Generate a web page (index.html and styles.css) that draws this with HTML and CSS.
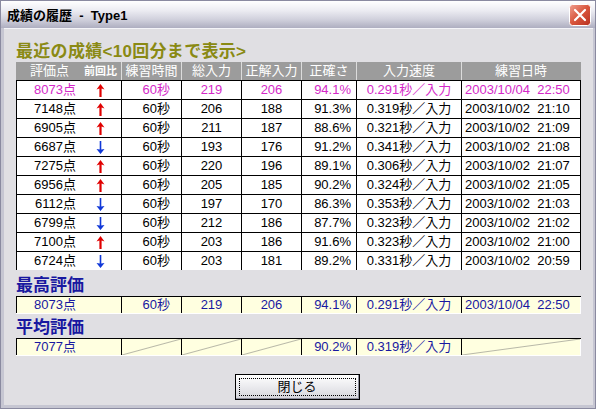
FILE: index.html
```html
<!DOCTYPE html>
<html>
  <head>
    <title>成績の履歴 - Type1</title>
    <link rel="stylesheet" href="styles.css">
  </head>
  <body>
    <svg class="defs" width="0" height="0">
      <symbol id="arrow-up" viewBox="0 0 9 13">
        <polygon points="4.5,0 8.5,5.5 5.6,4.6 5.6,13 3.4,13 3.4,4.6 0.5,5.5" fill="#e00000"/>
      </symbol>
      <symbol id="arrow-down" viewBox="0 0 9 13">
        <polygon points="4.5,13 8.5,8 5.3,8.6 5.3,0 3.7,0 3.7,8.6 0.5,8" fill="#1038d8"/>
      </symbol>
    </svg>

    <div class="window">
      <div class="titlebar">
        <span class="title">成績の履歴  -  Type1</span>
        <svg class="close-icon" width="22" height="22" viewBox="0 0 22 22">
          <defs>
            <linearGradient id="close-bg" x1="0" y1="0" x2="1" y2="1">
              <stop offset="0" stop-color="#f0a090"/>
              <stop offset="0.5" stop-color="#d8553c"/>
              <stop offset="1" stop-color="#b83020"/>
            </linearGradient>
          </defs>
          <rect x="0.5" y="0.5" width="21" height="21" rx="3" fill="url(#close-bg)" stroke="#ffffff"/>
          <path d="M6 6 L16 16 M16 6 L6 16" stroke="#ffffff" stroke-width="2.2" stroke-linecap="round"/>
        </svg>
      </div>

      <div class="frame">
        <div class="client">
          <h2 class="heading recent">最近の成績&lt;10回分まで表示&gt;</h2>

          <div class="row head-row">
            <div class="cell head score-head"><span class="score-label">評価点</span><span class="diff-label">前回比</span></div>
            <div class="cell head">練習時間</div>
            <div class="cell head">総入力</div>
            <div class="cell head">正解入力</div>
            <div class="cell head">正確さ</div>
            <div class="cell head">入力速度</div>
            <div class="cell head last">練習日時</div>
          </div>

          <div class="row data-row latest">
            <div class="cell score"><span class="points">8073点</span><svg class="arrow"><use href="#arrow-up"/></svg></div>
            <div class="cell time">60秒</div>
            <div class="cell num">219</div>
            <div class="cell num">206</div>
            <div class="cell pct">94.1%</div>
            <div class="cell num">0.291秒／入力</div>
            <div class="cell date last">2003/10/04  22:50</div>
          </div>
          <div class="row data-row">
            <div class="cell score"><span class="points">7148点</span><svg class="arrow"><use href="#arrow-up"/></svg></div>
            <div class="cell time">60秒</div>
            <div class="cell num">206</div>
            <div class="cell num">188</div>
            <div class="cell pct">91.3%</div>
            <div class="cell num">0.319秒／入力</div>
            <div class="cell date last">2003/10/02  21:10</div>
          </div>
          <div class="row data-row">
            <div class="cell score"><span class="points">6905点</span><svg class="arrow"><use href="#arrow-up"/></svg></div>
            <div class="cell time">60秒</div>
            <div class="cell num">211</div>
            <div class="cell num">187</div>
            <div class="cell pct">88.6%</div>
            <div class="cell num">0.321秒／入力</div>
            <div class="cell date last">2003/10/02  21:09</div>
          </div>
          <div class="row data-row">
            <div class="cell score"><span class="points">6687点</span><svg class="arrow"><use href="#arrow-down"/></svg></div>
            <div class="cell time">60秒</div>
            <div class="cell num">193</div>
            <div class="cell num">176</div>
            <div class="cell pct">91.2%</div>
            <div class="cell num">0.341秒／入力</div>
            <div class="cell date last">2003/10/02  21:08</div>
          </div>
          <div class="row data-row">
            <div class="cell score"><span class="points">7275点</span><svg class="arrow"><use href="#arrow-up"/></svg></div>
            <div class="cell time">60秒</div>
            <div class="cell num">220</div>
            <div class="cell num">196</div>
            <div class="cell pct">89.1%</div>
            <div class="cell num">0.306秒／入力</div>
            <div class="cell date last">2003/10/02  21:07</div>
          </div>
          <div class="row data-row">
            <div class="cell score"><span class="points">6956点</span><svg class="arrow"><use href="#arrow-up"/></svg></div>
            <div class="cell time">60秒</div>
            <div class="cell num">205</div>
            <div class="cell num">185</div>
            <div class="cell pct">90.2%</div>
            <div class="cell num">0.324秒／入力</div>
            <div class="cell date last">2003/10/02  21:05</div>
          </div>
          <div class="row data-row">
            <div class="cell score"><span class="points">6112点</span><svg class="arrow"><use href="#arrow-down"/></svg></div>
            <div class="cell time">60秒</div>
            <div class="cell num">197</div>
            <div class="cell num">170</div>
            <div class="cell pct">86.3%</div>
            <div class="cell num">0.353秒／入力</div>
            <div class="cell date last">2003/10/02  21:03</div>
          </div>
          <div class="row data-row">
            <div class="cell score"><span class="points">6799点</span><svg class="arrow"><use href="#arrow-down"/></svg></div>
            <div class="cell time">60秒</div>
            <div class="cell num">212</div>
            <div class="cell num">186</div>
            <div class="cell pct">87.7%</div>
            <div class="cell num">0.323秒／入力</div>
            <div class="cell date last">2003/10/02  21:02</div>
          </div>
          <div class="row data-row">
            <div class="cell score"><span class="points">7100点</span><svg class="arrow"><use href="#arrow-up"/></svg></div>
            <div class="cell time">60秒</div>
            <div class="cell num">203</div>
            <div class="cell num">186</div>
            <div class="cell pct">91.6%</div>
            <div class="cell num">0.323秒／入力</div>
            <div class="cell date last">2003/10/02  21:00</div>
          </div>
          <div class="row data-row">
            <div class="cell score"><span class="points">6724点</span><svg class="arrow"><use href="#arrow-down"/></svg></div>
            <div class="cell time">60秒</div>
            <div class="cell num">203</div>
            <div class="cell num">181</div>
            <div class="cell pct">89.2%</div>
            <div class="cell num">0.331秒／入力</div>
            <div class="cell date last">2003/10/02  20:59</div>
          </div>

          <h2 class="heading summary">最高評価</h2>
          <div class="row summary-row">
            <div class="cell score"><span class="points">8073点</span></div>
            <div class="cell time">60秒</div>
            <div class="cell num">219</div>
            <div class="cell num">206</div>
            <div class="cell pct">94.1%</div>
            <div class="cell num">0.291秒／入力</div>
            <div class="cell date">2003/10/04  22:50</div>
          </div>

          <h2 class="heading summary avg-heading">平均評価</h2>
          <div class="row summary-row">
            <div class="cell score"><span class="points">7077点</span></div>
            <div class="cell empty"></div>
            <div class="cell empty"></div>
            <div class="cell empty"></div>
            <div class="cell pct">90.2%</div>
            <div class="cell num">0.319秒／入力</div>
            <div class="cell empty"></div>
          </div>

          <div class="button-container">
            <button class="close-button"><span class="focus">閉じる</span></button>
          </div>
        </div>
      </div>
    </div>
  </body>
</html>
```

FILE: styles.css
```css
body {
  margin: 0;
  font-family: "Liberation Sans", "Noto Sans CJK JP", sans-serif;
  font-size: 13px;
}

.defs {
  position: absolute;
}

.window {
  width: 596px;
  height: 409px;
  box-sizing: border-box;
  border: 1px solid #8a8aa0;
  background-color: #c6c6d2;
  display: flex;
  flex-direction: column;
}

.titlebar {
  height: 27px;
  flex: none;
  display: flex;
  align-items: center;
  justify-content: space-between;
  padding: 0 4px 0 6px;
  background: linear-gradient(#ffffff 0%, #ececf2 35%, #cfcfdb 70%, #aeaec0 100%);
}

.title {
  font-weight: bold;
  font-size: 13px;
  color: #000000;
  white-space: pre;
}

.close-icon {
  margin-top: 1px;
}

.frame {
  flex: 1;
  display: flex;
  padding: 0 3px 3px;
}

.client {
  flex: 1;
  background-color: #e0dfe3;
  padding: 14px 12px 0;
  border-top: 1px solid #f4f4f8;
  box-sizing: border-box;
}

.heading {
  margin: 0;
  font-size: 17px;
  line-height: 20px;
  font-weight: bold;
}

.recent {
  margin-top: -1px;
  color: #8a8a14;
  letter-spacing: 0.3px;
}

.summary {
  color: #1818a0;
  margin-top: 6px;
}

.avg-heading {
  margin-top: 4px;
}

.row {
  display: grid;
  grid-template-columns: 105px 60px 60px 60px 55px 105px 120px;
  width: 565px;
}

.cell {
  box-sizing: border-box;
  border-left: 1px solid #000000;
  white-space: pre;
  overflow: hidden;
}

.head-row {
  height: 18px;
  background-color: #9c9c9c;
}

.head {
  color: #ffffff;
  text-align: center;
  line-height: 18px;
  border-left: 1px solid #dcdcdc;
}

.head.last {
  border-right: 1px solid #9c9c9c;
}

.score-head {
  display: flex;
  text-align: left;
  border-left: none;
}

.score-label {
  padding-left: 14px;
  width: 54px;
}

.diff-label {
  font-size: 11px;
  font-weight: bold;
}

.data-row {
  height: 19px;
  background-color: #ffffff;
}

.data-row .cell {
  border-top: 1px solid #000000;
  line-height: 18px;
}

.data-row .last {
  border-right: 1px solid #000000;
}

.latest {
  color: #d428c8;
}

.score {
  display: flex;
  align-items: center;
}

.points {
  width: 59px;
  text-align: right;
}

.arrow {
  width: 9px;
  height: 13px;
  margin-left: 20px;
}

.time {
  text-align: right;
  padding-right: 11px;
}

.num {
  text-align: center;
}

.pct {
  text-align: right;
  padding-right: 5px;
}

.date {
  padding-left: 3px;
}

.summary-row {
  height: 18px;
  background-color: #ffffe0;
  color: #1818a0;
  border-top: 1px solid #000000;
  border-bottom: 1px solid #ffffff;
  box-sizing: border-box;
}

.summary-row .cell {
  line-height: 16px;
}

.summary-row .cell:last-child {
  border-right: 1px solid #ffffff;
}

.empty {
  background: linear-gradient(to bottom right,
    transparent calc(50% - 1px),
    #b8b8a8 50%,
    transparent calc(50% + 1px));
}

.button-container {
  display: flex;
  justify-content: center;
  margin-top: 18px;
  padding-right: 3px;
}

.close-button {
  width: 125px;
  height: 26px;
  padding: 3px;
  border: 1px solid #000000;
  background: linear-gradient(#ffffff, #e6e6ea 60%, #d4d4da);
  box-shadow: inset -1px -1px 0 #8c8c9a;
  font-family: "Liberation Sans", "Noto Sans CJK JP", sans-serif;
  font-size: 13px;
  color: #000000;
  display: flex;
}

.focus {
  flex: 1;
  border: 1px dotted #000000;
  line-height: 16px;
  text-align: center;
}
```
